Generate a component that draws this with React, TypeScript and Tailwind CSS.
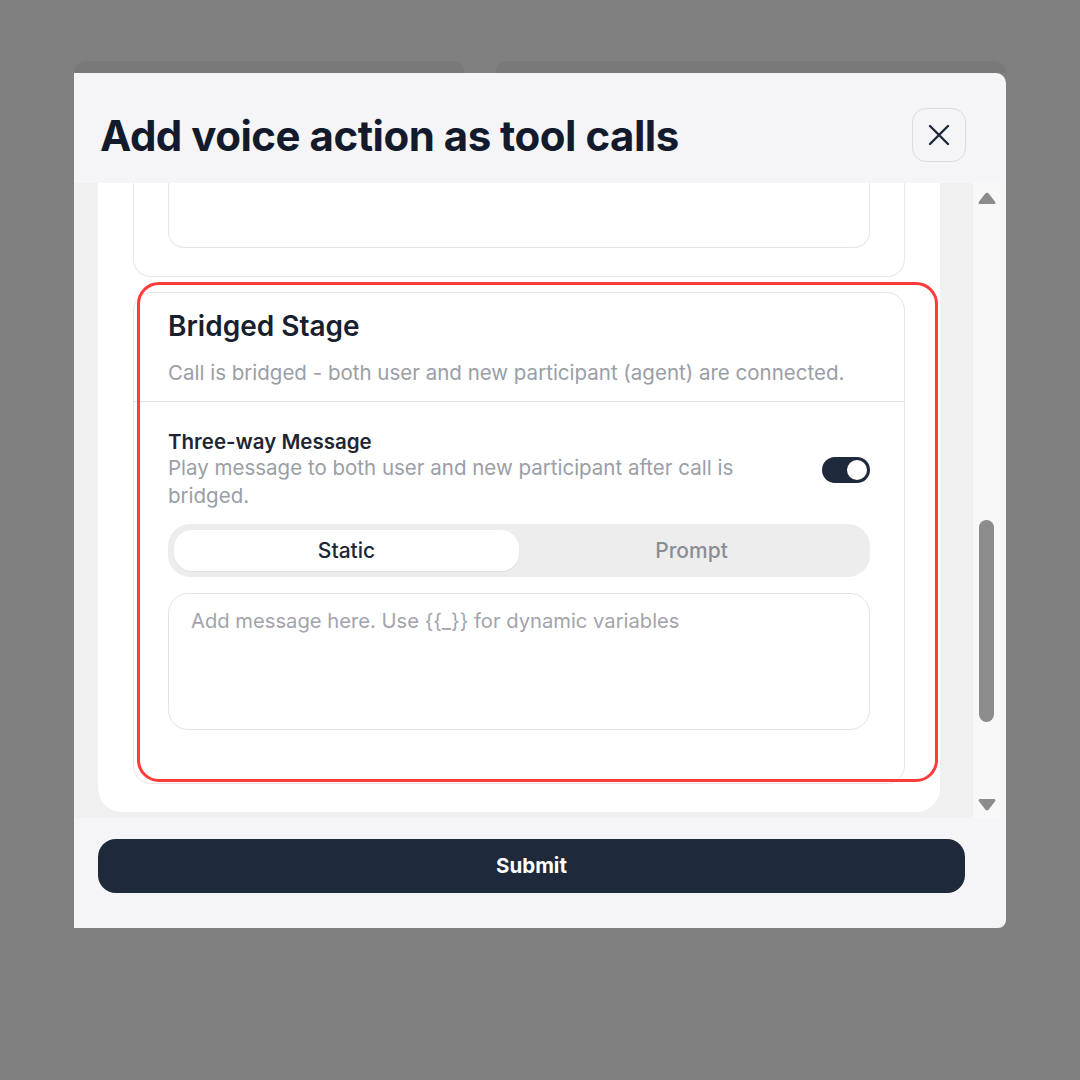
import React from "react";

const Arrow = ({ down = false }: { down?: boolean }) => (
  <svg width="18" height="12" viewBox="0 0 18 12" className={down ? "rotate-180" : ""}>
    <path d="M7.3 1.6a2 2 0 0 1 3.4 0l6.4 8.2c.8 1 .1 2.2-1.2 2.2H2.1C.8 12 .1 10.8.9 9.8z" fill="#8c8c8c" />
  </svg>
);

const Toggle = ({ on }: { on: boolean }) => (
  <div
    className={`flex h-[26px] w-[48px] shrink-0 items-center rounded-full px-[3px] ${
      on ? "justify-end bg-[#1e293b]" : "justify-start bg-[#d4d4d8]"
    }`}
  >
    <div className="h-[20px] w-[20px] rounded-full bg-white" />
  </div>
);

export default function App() {
  return (
    <div className="relative min-h-screen w-full bg-[#808080] font-['Inter',sans-serif]">
      <div className="w-[1006px] pl-[74px] pt-[61px]">
        {/* panels behind the dialog */}
        <div className="flex h-[12px] gap-[30px]">
          <div className="w-[391px] rounded-t-[12px] bg-[#797979]" />
          <div className="flex-1 rounded-t-[12px] bg-[#797979]" />
        </div>

        <div className="flex h-[855px] w-[932px] flex-col overflow-hidden rounded-br-[8px] rounded-tr-[10px] bg-[#f5f5f7]">
          {/* header */}
          <div className="flex h-[110px] shrink-0 items-center justify-between pl-[26px] pr-[40px] pt-[14px]">
            <h1 className="text-[42px] font-bold tracking-[-0.5px] text-[#131a2c]">
              Add voice action as tool calls
            </h1>
            <button className="flex h-[54px] w-[54px] items-center justify-center rounded-[14px] border border-[#dcdcde] bg-[#f5f5f7]">
              <svg width="22" height="22" viewBox="0 0 22 22" fill="none" stroke="#1e293b" strokeWidth="2.4" strokeLinecap="round">
                <path d="M2 2l18 18M20 2L2 20" />
              </svg>
            </button>
          </div>

          {/* scroll body */}
          <div className="flex h-[635px] shrink-0">
            <div className="flex flex-1 flex-col justify-end overflow-hidden bg-[#f0f0f0] pb-[6px] pl-[24px] pr-[33px]">
              <div className="flex shrink-0 flex-col gap-[15px] rounded-b-[24px] bg-white px-[35px] pb-[28px]">
                {/* previous stage (cut off) */}
                <div className="rounded-b-[18px] border border-t-0 border-[#e8e8ea] px-[34px] pb-[28px]">
                  <div className="h-[200px] rounded-b-[16px] border border-t-0 border-[#e5e5e7]" />
                </div>

                {/* bridged stage */}
                <div className="rounded-[18px] border border-[#e6e6e8]">
                  <div className="border-b border-[#e3e3e5] px-[34px] pb-[14px] pt-[17px]">
                    <h2 className="text-[28px] font-semibold leading-[32px] text-[#18202f]">Bridged Stage</h2>
                    <p className="mt-[17px] text-[20.5px] leading-[28px] text-[#9a9ea6]">
                      Call is bridged - both user and new participant (agent) are connected.
                    </p>
                  </div>
                  <div className="px-[34px] pb-[53px] pt-[28px]">
                    <div className="flex items-center justify-between">
                      <div className="max-w-[620px]">
                        <div className="text-[20.5px] font-semibold leading-[24px] text-[#1f2633]">Three-way Message</div>
                        <p className="text-[20.5px] leading-[28px] text-[#9a9ea6]">
                          Play message to both user and new participant after call is bridged.
                        </p>
                      </div>
                      <Toggle on />
                    </div>

                    <div className="mt-[14px] grid h-[53px] grid-cols-2 rounded-[22px] bg-[#ededee] p-[6px]">
                      <button className="rounded-[18px] bg-white text-[21px] font-medium text-[#1f2633] shadow-[0_1px_2px_rgba(0,0,0,0.06)]">
                        Static
                      </button>
                      <button className="text-[21px] font-medium text-[#8b8d92]">Prompt</button>
                    </div>

                    <div className="mt-[16px] h-[137px] rounded-[20px] border border-[#e4e4e7] px-[22px] pt-[13px] text-[20.2px] leading-[28px] text-[#a3a4ab]">
                      Add message here. Use {"{{_}}"} for dynamic variables
                    </div>
                  </div>
                </div>
              </div>
            </div>

            {/* scrollbar */}
            <div className="flex w-[27px] flex-col items-center bg-[#f8f8f8] pb-[7px] pt-[9px]">
              <Arrow />
              <div className="mt-[316px] h-[202px] w-[15px] rounded-full bg-[#8c8c8c]" />
              <div className="flex-1" />
              <Arrow down />
            </div>
            <div className="w-[6px]" />
          </div>

          {/* footer */}
          <div className="pb-[35px] pl-[24px] pr-[41px] pt-[21px]">
            <button className="flex h-[54px] w-full items-center justify-center rounded-[18px] bg-[#1e293b] text-[20.5px] font-bold text-white">
              Submit
            </button>
          </div>
        </div>
      </div>

      {/* highlight annotation */}
      <div className="pointer-events-none absolute left-[137px] top-[282px] h-[500px] w-[801px] rounded-[22px] border-[3px] border-[#ff3b3b]" />
    </div>
  );
}
